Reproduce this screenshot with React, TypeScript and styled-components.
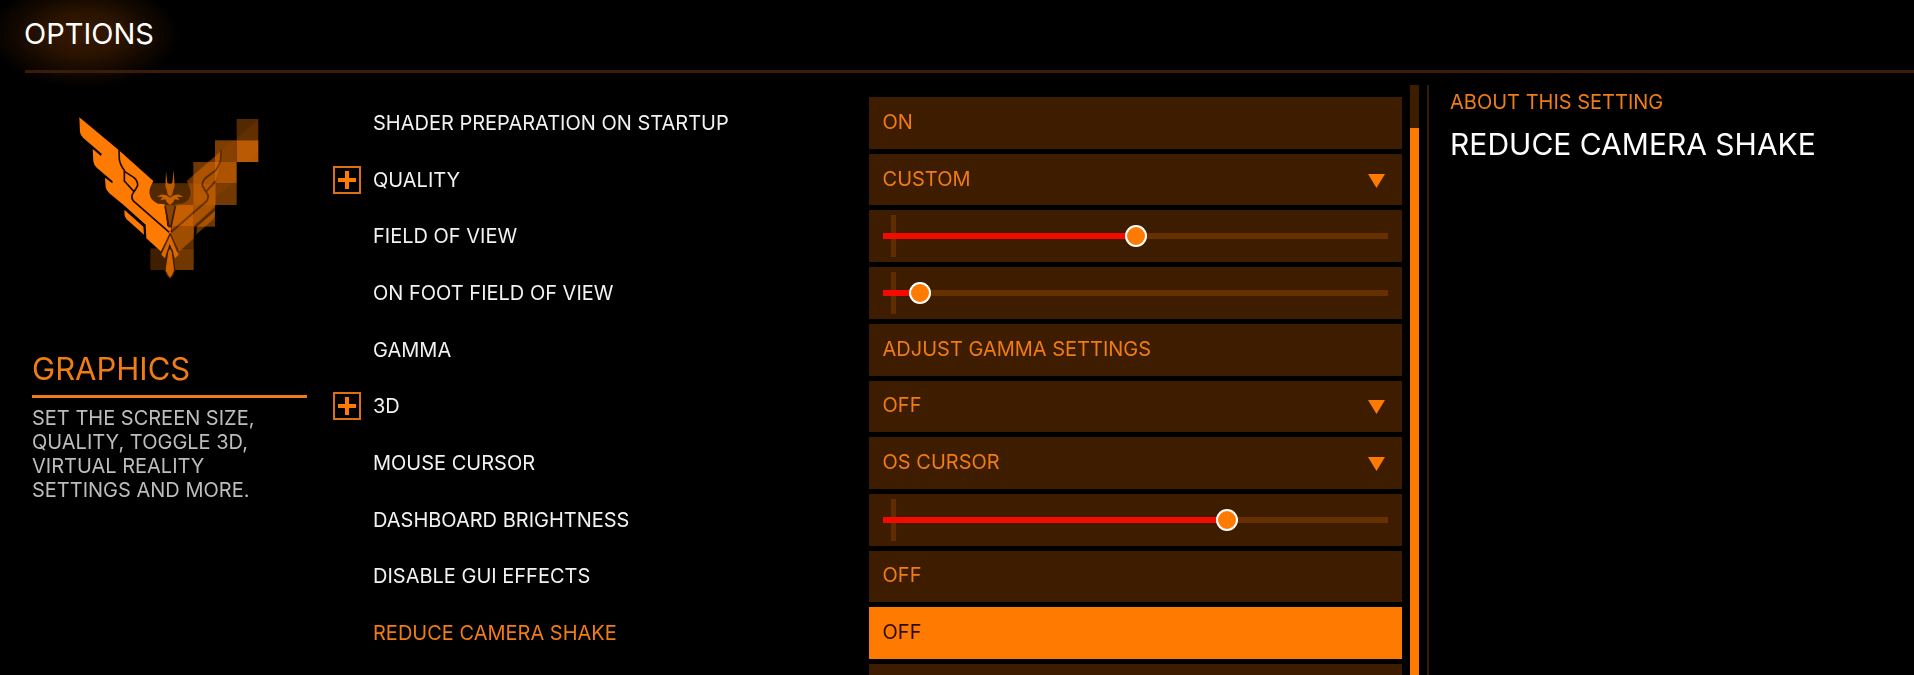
import React, { useState } from "react";
import styled, { createGlobalStyle, css } from "styled-components";

const color = {
  accent: "#ff7a00",
  text: "#ef7c14",
  panel: "#3d1c00",
  rule: "#3a1c08",
  track: "#663000",
  fill: "#f50a00",
};

const GlobalStyle = createGlobalStyle`
  *, *::before, *::after { box-sizing: border-box; }
  body {
    margin: 0;
    background: #000;
    color: #f2f2f2;
    font-family: Inter, "Liberation Sans", sans-serif;
    font-size: 20px;
    line-height: 24px;
    text-transform: uppercase;
  }
`;

const Page = styled.div`
  display: flex;
  flex-direction: column;
  min-height: 100vh;
`;

const TopBar = styled.header`
  flex: none;
  height: 85px;
  padding-left: 25px;
  background: radial-gradient(ellipse 96px 54px at 84px 34px, #361900 0%, #2a1300 40%, #120800 72%, transparent 100%);
`;

const PageTitle = styled.h1`
  margin: 0;
  padding: 14px 0 16px;
  border-bottom: 3px solid ${color.rule};
  color: #fff;
  font-size: 29px;
  font-weight: 400;
  line-height: 40px;
  text-indent: -1px;
`;

const Content = styled.main`
  flex: 1;
  display: grid;
  grid-template-columns: 333px minmax(0, 11fr) 26px minmax(0, 5fr);
`;

const Category = styled.aside`
  padding: 15px 26px 0 32px;
`;

const Emblem = styled.svg`
  display: block;
  width: 220px;
  height: 200px;
  margin-left: 28px;
`;

const CategoryName = styled.h2`
  margin: 49px 0 8px;
  padding-bottom: 6px;
  border-bottom: 3px solid ${color.text};
  color: ${color.text};
  font-size: 31px;
  font-weight: 400;
  line-height: 40px;
`;

const CategoryText = styled.p`
  width: 240px;
  margin: 0;
  color: #bdbdbd;
`;

/* The rows share the height of the window; the last one only peeks in. */
const SettingList = styled.div`
  display: grid;
  grid-template-rows: repeat(10, minmax(44px, 1fr)) 11px;
  gap: 5px;
  padding-top: 12px;
`;

const Row = styled.div`
  display: grid;
  grid-template-columns: minmax(0, 1fr) minmax(0, 1fr);
  gap: 2px;
`;

const LabelCell = styled.div`
  display: grid;
  grid-template-columns: 28px 1fr;
  gap: 12px;
  align-items: center;
`;

const Label = styled.label<{ $active?: boolean }>`
  grid-column: 2;
  color: ${(p) => (p.$active ? color.text : "inherit")};
`;

const ExpandButton = styled.button`
  display: grid;
  place-items: center;
  width: 28px;
  height: 28px;
  padding: 0;
  border: 2px solid #dc7014;
  background: none;
  color: ${color.accent};
`;

const field = css`
  width: 100%;
  height: 100%;
  min-width: 0;
  margin: 0;
  padding: 0 14px 2px;
  border: 0;
  border-radius: 0;
  background: ${color.panel};
  color: ${color.text};
  font: inherit;
  text-align: left;
  text-transform: inherit;
  outline: none;
`;

const ValueButton = styled.button<{ $active?: boolean }>`
  ${field}
  ${(p) => p.$active && css`background: ${color.accent}; color: #2b0d00;`}
`;

const SelectBox = styled.div`
  display: grid;
  grid-template-columns: minmax(0, 1fr) 34px;
  align-items: center;
`;

const Select = styled.select`
  ${field}
  grid-area: 1 / 1 / 2 / 3;
  appearance: none;
`;

const Arrow = styled.svg`
  grid-area: 1 / 2;
  width: 17px;
  height: 16px;
  padding-top: 2px;
  fill: ${color.accent};
  pointer-events: none;
`;

const SliderBox = styled.div`
  display: grid;
  align-items: center;
  padding: 0 14px;
  background: ${color.panel};
`;

const Slider = styled.input`
  appearance: none;
  width: 100%;
  height: 42px;
  margin: 0;
  background: linear-gradient(#5f2d00, #5f2d00) 8px 0 / 5px 100% no-repeat;
  outline: none;

  &::-webkit-slider-runnable-track {
    height: 6px;
    background: linear-gradient(
      to right,
      ${color.fill} calc(11px + (100% - 22px) * var(--level)),
      ${color.track} calc(11px + (100% - 22px) * var(--level))
    );
  }

  &::-webkit-slider-thumb {
    appearance: none;
    width: 22px;
    height: 22px;
    margin-top: -8px;
    border: 2px solid #fff;
    border-radius: 50%;
    background: ${color.accent};
  }
`;

const ScrollGutter = styled.div`
  display: flex;
  justify-content: space-between;
  margin-right: -1px;
  padding-left: 8px;
  border-right: 2px solid #341a08;
`;

const ScrollTrack = styled.div`
  width: 9px;
  padding-top: 43px;
  background: ${color.panel};
`;

const ScrollThumb = styled.div`
  height: 100%;
  background: ${color.accent};
`;

const About = styled.section`
  padding: 5px 20px 0 22px;
`;

const AboutCaption = styled.p`
  margin: 0;
  color: ${color.text};
`;

const AboutTitle = styled.h2`
  margin: 10px 0 0;
  color: #fff;
  font-size: 30px;
  font-weight: 400;
  line-height: 40px;
`;

const tiles: [number, number, string][] = [
  [530, 57, "#532900"],
  [465, 121, "#7c3d00"],
  [530, 121, "#b45804"],
  [400, 186, "#703700"],
  [465, 186, "#a45002"],
  [271, 250, "#3f1f00"],
  [336, 250, "#361a00"],
  [400, 250, "#844000"],
  [465, 250, "#743900"],
  [336, 315, "#9a4b00"],
  [400, 315, "#6e3600"],
  [336, 380, "#5e2e00"],
  [271, 445, "#3f1f00"],
  [336, 445, "#703800"],
];

const wing =
  "M58 52 L176 150 L280 243 L271 262 C264 285 274 304 294 311 L314 313 L322 378 L333 382 L331 404 L302 454 L259 415 L257 374 L190 314 L148 280 Q139 272 137 262 L135 233 L157 250 L158 244 L111 204 Q101 196 100 184 L98 147 L123 168 L125 161 L70 114 Q61 106 60 96Z";
const feather = "M193 329 L250 380 L252 404 L200 358 Q195 353 194 346Z";
const seams =
  "M177 148 L178 178 Q180 194 193 211 L193 243 L222 275 M193 214 L222 233 Q233 242 233 256 Q229 266 220 278 Q211 289 220 303 L328 397";

function CategoryEmblem() {
  return (
    <Emblem viewBox="0 0 660 600" aria-hidden="true">
      <clipPath id="far-wing">
        <path d="M330 0H466V600H330Z M465 121H595V186H530V315H465Z M530 57H595V121H530Z" />
      </clipPath>
      {tiles.map(([x, y, fill]) => (
        <rect key={`${x}-${y}`} x={x} y={y} width="65" height="65" fill={fill} />
      ))}
      <path d="M271 262 L280 250 H382 L394 263 Q402 296 370 313 L346 319 H314 L290 312 Q264 296 271 262Z" fill="#512800" />
      <g clipPath="url(#far-wing)" opacity="0.42">
        <path d="M602 52 L484 150 L466 290 L530 240 L595 150Z" fill={color.accent} opacity="0.2" />
        <path d="M484 152 L380 243 L389 262 C398 286 388 304 366 311 L346 313 L331 382 V404 L358 454 L401 415 L403 376 L467 318 V243 L484 180Z" fill={color.accent} />
        <path d="M467 329 L410 380 L408 404 L462 356Z" fill={color.accent} />
        <path d="M484 150 L482 178 Q480 194 467 211 L438 233 Q427 242 427 256 Q431 266 440 278 Q449 289 440 303 L330 399 M467 243 L438 275 M467 327 L407 380 V406" fill="none" stroke="#2a1400" strokeWidth="5" />
      </g>
      <path d={wing} fill={color.accent} />
      <path d={feather} fill={color.accent} />
      <path d={seams} fill="none" stroke="#1c0a00" strokeWidth="5" />
      <path d="M314 316 H347 L335 382 H326Z" fill="#8a4300" />
      <path d="M315 318 L327 379 H333 L346 318" fill="none" stroke="#3c1c00" strokeWidth="5" />
      <path d="M318 213 L322 248 L327 252 H333 L337 248 L341 210 L344 258 L340 270 L337 283 L330 291 L323 283 L320 270 L316 258Z" fill="#bd5c00" />
      <path d="M291 290 L303 284 Q318 282 330 293 Q344 282 358 284 L370 290 L352 291 L358 300 L344 298 L340 306 L330 315 L320 306 L316 298 L301 301 L308 291Z" fill="#c86200" />
      <path d="M329 396 L304 464 L315 475 L329 432 L345 475 L356 464 L334 396Z" fill="#d96800" />
      <path d="M331 400 L305 456 M331 400 L354 456" stroke="#542900" strokeWidth="5" />
      <path d="M330 442 L323 454 L315 508 L322 526 L330 534 L338 526 L344 508 L337 454Z" fill="#d06300" stroke="#3c1c00" strokeWidth="4" />
      <path d="M316 510 L330 533 L343 510Z" fill="#d06300" />
    </Emblem>
  );
}

type Setting = {
  label: string;
  kind: "button" | "select" | "slider";
  value: string | number;
  expandable?: boolean;
  active?: boolean;
};

const settings: Setting[] = [
  { label: "Shader preparation on startup", kind: "button", value: "On" },
  { label: "Quality", kind: "select", value: "Custom", expandable: true },
  { label: "Field of view", kind: "slider", value: 501 },
  { label: "On foot field of view", kind: "slider", value: 55 },
  { label: "Gamma", kind: "button", value: "Adjust gamma settings" },
  { label: "3D", kind: "select", value: "Off", expandable: true },
  { label: "Mouse cursor", kind: "select", value: "OS cursor" },
  { label: "Dashboard brightness", kind: "slider", value: 690 },
  { label: "Disable GUI effects", kind: "button", value: "Off" },
  { label: "Reduce camera shake", kind: "button", value: "Off", active: true },
];

function LevelSlider({ id, initial }: { id: string; initial: number }) {
  const [level, setLevel] = useState(initial);
  return (
    <SliderBox>
      <Slider
        id={id}
        type="range"
        min={0}
        max={1000}
        value={level}
        onChange={(e) => setLevel(Number(e.target.value))}
        style={{ "--level": level / 1000 } as React.CSSProperties}
      />
    </SliderBox>
  );
}

function SettingRow({ setting, id }: { setting: Setting; id: string }) {
  const { label, kind, value, expandable, active } = setting;
  return (
    <Row>
      <LabelCell>
        {expandable && (
          <ExpandButton type="button" aria-label={`Expand ${label}`}>
            <svg width="18" height="18" viewBox="0 0 18 18" aria-hidden="true">
              <path d="M9 0V18M0 9H18" stroke="currentColor" strokeWidth="4" />
            </svg>
          </ExpandButton>
        )}
        <Label htmlFor={id} $active={active}>{label}</Label>
      </LabelCell>
      {kind === "slider" && <LevelSlider id={id} initial={Number(value)} />}
      {kind === "button" && <ValueButton id={id} type="button" $active={active}>{value}</ValueButton>}
      {kind === "select" && (
        <SelectBox>
          <Select id={id} defaultValue={value}>
            <option>{value}</option>
          </Select>
          <Arrow viewBox="0 0 17 14" aria-hidden="true">
            <path d="M0 0H17L8.500 14Z" />
          </Arrow>
        </SelectBox>
      )}
    </Row>
  );
}

export default function App() {
  return (
    <Page>
      <GlobalStyle />
      <TopBar>
        <PageTitle>Options</PageTitle>
      </TopBar>
      <Content>
        <Category>
          <CategoryEmblem />
          <CategoryName>Graphics</CategoryName>
          <CategoryText>Set the screen size, quality, toggle 3D, virtual reality settings and more.</CategoryText>
        </Category>
        <SettingList>
          {settings.map((setting, i) => (
            <SettingRow key={setting.label} setting={setting} id={`setting-${i}`} />
          ))}
          <Row>
            <LabelCell />
            <SliderBox />
          </Row>
        </SettingList>
        <ScrollGutter>
          <ScrollTrack>
            <ScrollThumb />
          </ScrollTrack>
        </ScrollGutter>
        <About>
          <AboutCaption>About this setting</AboutCaption>
          <AboutTitle>Reduce camera shake</AboutTitle>
        </About>
      </Content>
    </Page>
  );
}
